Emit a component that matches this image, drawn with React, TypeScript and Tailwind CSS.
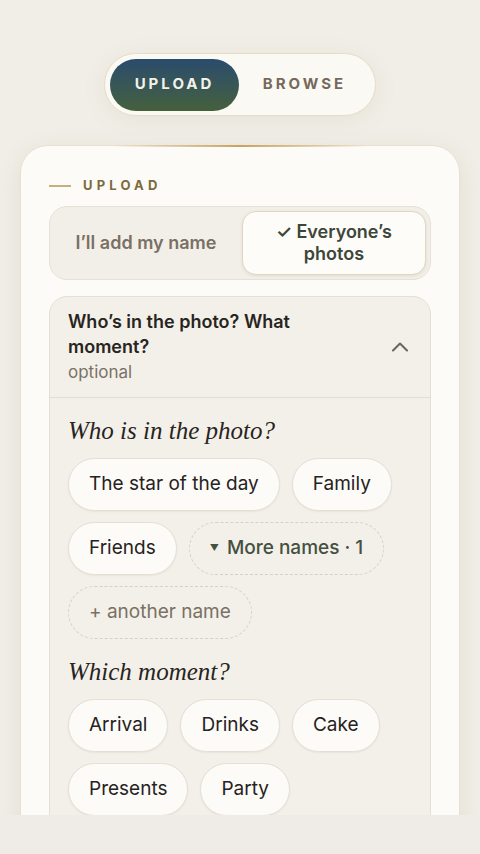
import { ChevronUp } from "lucide-react";

const WHO = ["The star of the day", "Family", "Friends"];
const MOMENTS = ["Arrival", "Drinks", "Cake", "Presents", "Party"];

function Chip({ label }: { label: string }) {
  return (
    <button className="h-[53px] px-5 rounded-full bg-[#fcfbf8] border border-[#e4dfd4] text-[19px] text-[#26221c] shadow-[0_1px_2px_rgba(80,60,30,0.06)]">
      {label}
    </button>
  );
}

const serif = { fontFamily: "'Liberation Serif', 'DejaVu Serif', serif" };

export default function App() {
  return (
    <div
      className="min-h-screen bg-[#efece7]"
      style={{ fontFamily: "Inter, 'Noto Sans', sans-serif" }}
    >
      <div className="h-[815px] overflow-hidden bg-[#f1eee7]">
        {/* top mode switch */}
        <div className="flex justify-center pt-[53px]">
          <div className="flex items-center h-[63px] w-[272px] p-[5px] rounded-full bg-[#fbf9f4] border border-[#e7dcc6] shadow-[0_4px_24px_rgba(120,100,60,0.08)]">
            <div className="h-[52px] w-[129px] rounded-full bg-gradient-to-b from-[#2b4b6c] to-[#46603b] flex items-center justify-center text-[15px] font-bold tracking-[0.2em] text-[#f4f1ea]">
              UPLOAD
            </div>
            <div className="flex-1 flex items-center justify-center text-[15px] font-bold tracking-[0.2em] text-[#76695b]">
              BROWSE
            </div>
          </div>
        </div>

        {/* card */}
        <div className="relative mx-5 mt-[29px] rounded-[28px] bg-[#fcfbf7] border border-[#e9e1d1] shadow-[0_6px_24px_rgba(110,90,50,0.10)] px-7 pt-[30px] pb-8">
          <div className="absolute -top-px left-[90px] right-[90px] h-[2px] bg-gradient-to-r from-transparent via-[#c9a35e] to-transparent" />

          <div className="flex items-center gap-3">
            <div className="w-[22px] h-[2px] bg-[#c8b07c]" />
            <span className="text-[13px] font-bold tracking-[0.32em] text-[#7c6a3c]">
              UPLOAD
            </span>
          </div>

          {/* name mode segmented */}
          <div className="mt-[10px] grid grid-cols-2 gap-1 p-1 h-[74px] rounded-[18px] bg-[#f2efe8] border border-[#e6e1d6]">
            <div className="flex items-center justify-center text-[18px] font-semibold text-[#7a7064]">
              I’ll add my name
            </div>
            <div className="flex items-center justify-center text-center rounded-[14px] bg-[#fdfcf9] border border-[#e0d6c4] shadow-[0_1px_3px_rgba(90,70,40,0.10)] text-[18px] font-semibold leading-[22px] text-[#3d463a]">
              ✓ Everyone’s
              <br />
              photos
            </div>
          </div>

          {/* accordion */}
          <div className="mt-[16px] rounded-[18px] bg-[#f3f0e9] border border-[#e4dfd4]">
            <div className="flex items-center justify-between pl-[18px] pr-[16px] pt-[12px] pb-[11px] border-b border-[#e2ddd2]">
              <div>
                <div className="text-[18px] font-semibold leading-[25px] text-[#28241e] w-[260px]">
                  Who’s in the photo? What moment?
                </div>
                <div className="text-[17px] leading-[27px] text-[#7a7266]">
                  optional
                </div>
              </div>
              <ChevronUp className="w-7 h-7 text-[#6b655c]" strokeWidth={1.8} />
            </div>

            <div className="px-[18px] pt-[16px] pb-6">
              <div className="text-[25px] italic leading-[34px] text-[#28241e]" style={serif}>
                Who is in the photo?
              </div>
              <div className="mt-[10px] flex flex-wrap gap-x-3 gap-y-[11px]">
                {WHO.map((w) => (
                  <Chip key={w} label={w} />
                ))}
                <button className="h-[53px] px-5 rounded-full border border-dashed border-[#d8d1c2] text-[19px] font-medium text-[#445040] flex items-center gap-2">
                  <span className="text-[9px]">▼</span>
                  More names · 1
                </button>
                <button className="h-[53px] px-5 rounded-full border border-dashed border-[#d8d1c2] text-[19px] text-[#7a7064]">
                  + another name
                </button>
              </div>

              <div className="mt-[16px] text-[25px] italic leading-[34px] text-[#28241e]" style={serif}>
                Which moment?
              </div>
              <div className="mt-[10px] flex flex-wrap gap-x-3 gap-y-[11px]">
                {MOMENTS.map((m) => (
                  <Chip key={m} label={m} />
                ))}
              </div>
            </div>
          </div>
        </div>
      </div>
    </div>
  );
}
